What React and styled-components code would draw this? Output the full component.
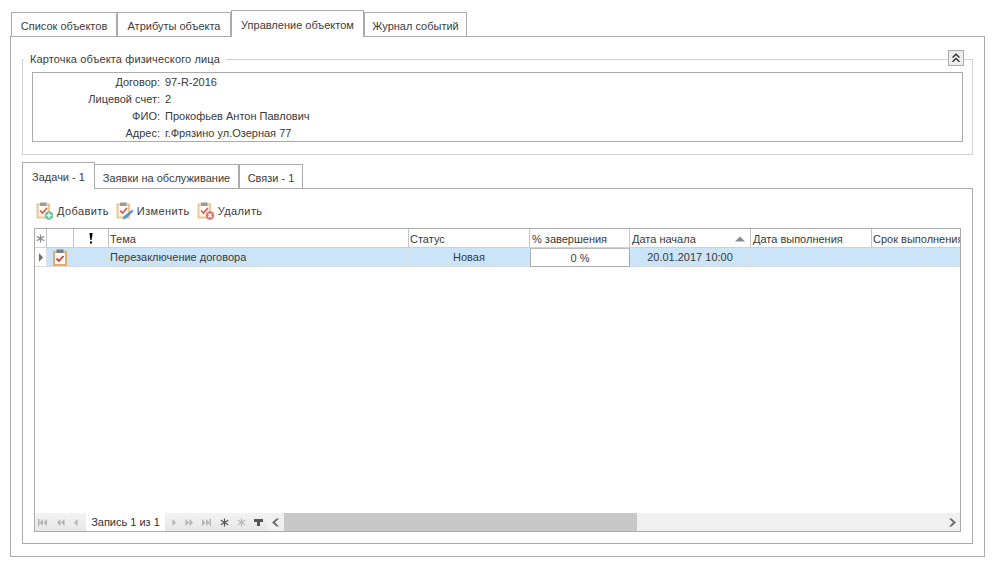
import React from "react";
import styled, { createGlobalStyle } from "styled-components";

const Global = createGlobalStyle`
  html, body { margin: 0; padding: 0; background: #fff; }
  body { font-family: "Liberation Sans", Arial, sans-serif; font-size: 11px; color: #3a3a3a; }
`;

const Page = styled.div`
  width: 995px; height: 567px; box-sizing: border-box;
  padding: 10px; overflow: hidden;
  display: flex; flex-direction: column;
`;
const TabStrip = styled.div`
  display: flex; align-items: flex-end; padding-left: ${p => p.$indent}px;
  position: relative; z-index: 1;
  margin-bottom: -1px; height: ${p => p.$h}px;
`;
const Tab = styled.div`
  box-sizing: border-box; width: ${p => p.$w}px;
  height: ${p => p.$active ? 27 : 25}px;
  border: 1px solid #ababab;
  border-bottom: ${p => p.$active ? "none" : "1px solid #ababab"};
  margin-left: ${p => p.$gap || 0}px;
  background: #fff; display: flex; align-items: center; justify-content: center;
  padding-top: ${p => p.$active ? 2 : 2}px;
  white-space: nowrap; color: #3c3c3c;
  z-index: ${p => p.$active ? 2 : 0};
`;
const OuterPanel = styled.div`
  box-sizing: border-box; width: 975px; height: 521px;
  border: 1px solid #ababab; padding: 15px 11px 12px 11px;
  display: flex; flex-direction: column;
`;
const CardGroup = styled.fieldset`
  position: relative; box-sizing: border-box; margin: 0; width: 951px; height: 103px;
  border: 1px solid #d2d2d2; padding: 0 9px; min-width: 0;
`;
const Legend = styled.legend`
  margin-left: -8px; padding: 0 6px; line-height: 14px; color: #3a3a3a; font-size: 11px; letter-spacing: 0.12px;
`;
const Collapse = styled.button`
  position: absolute; top: -16px; right: 8px; width: 16px; height: 16px; padding: 0;
  border: 1px solid #ababab; background: #ececec; display: flex; align-items: center; justify-content: center;
`;
const Details = styled.div`
  box-sizing: border-box; height: 70px; margin-top: 6px; border: 1px solid #ababab;
  display: grid; grid-template-columns: 127px 1fr; grid-auto-rows: 17px; align-items: center;
`;
const Label = styled.div`text-align: right;`;
const Value = styled.div`padding-left: 5px;`;
const InnerTabsWrap = styled.div`margin-top: 7px; display: flex; flex-direction: column; flex: 1;`;
const InnerPanel = styled.div`
  box-sizing: border-box; width: 951px; flex: 1; border: 1px solid #ababab;
  padding: 12px 11px 11px 11px; display: flex; flex-direction: column;
`;
const Toolbar = styled.div`display: flex; align-items: center; height: 20px; margin-bottom: 7px; padding-left: 2px;`;
const ToolButton = styled.div`
  display: flex; align-items: center; gap: 3px; margin-right: 7px; white-space: nowrap; color: #3a3a3a;
  letter-spacing: 0.4px;
`;
const Grid = styled.div`
  flex: 1; border: 1px solid #ababab; display: flex; flex-direction: column; overflow: hidden; min-height: 0;
`;
const COLS = "12px 27px 35px 300px 121px 100px 121px 121px 100px";
const HeaderRow = styled.div`
  display: grid; grid-template-columns: ${COLS}; height: 19px; flex: none;
  border-bottom: 1px solid #d0d0d0; box-sizing: border-box;
`;
const HeaderCell = styled.div`
  box-sizing: border-box; border-right: 1px solid #c4c4c4; display: flex; align-items: center;
  justify-content: ${p => p.$center ? "center" : "space-between"};
  padding: ${p => p.$center ? 0 : `1px 0 0 ${p.$pl || 1}px`}; white-space: nowrap; overflow: hidden;
  color: #3a3a3a;
`;
const DataRow = styled.div`
  display: grid; grid-template-columns: ${COLS}; height: 19px; flex: none; box-sizing: border-box;
  border-bottom: 1px solid #d8d8d8;
`;
const DataCell = styled.div`
  box-sizing: border-box; background: ${p => p.$white || p.$plain ? "#fff" : "#cce4f7"};
  border-right: 1px solid #d8e4ec; display: flex; align-items: center; white-space: nowrap;
  justify-content: ${p => p.$align || "center"}; padding: ${p => p.$align === "flex-start" ? "0 1px" : 0};
  ${p => p.$white ? "border: 1px solid #ababab; border-top-color:#bbb; margin-bottom:-1px;" : ""}
`;
const GridBody = styled.div`flex: 1;`;
const Footer = styled.div`
  flex: none; height: 18px; display: flex; align-items: stretch; background: #f0f0f0;
`;
const Nav = styled.div`
  display: flex; align-items: center; justify-content: space-between;
  width: ${p => p.$w}px; padding: 0 ${p => p.$pr}px 0 ${p => p.$pl}px; box-sizing: border-box;
  background: linear-gradient(#f3f3f3, #e6e6e6);
`;
const RecordInfo = styled.div`
  width: 79px; background: #fff; display: flex; align-items: center; justify-content: center; color: #333; white-space: nowrap;
`;
const ScrollBtn = styled.div`
  width: ${p => p.$w}px; display: flex; align-items: center; justify-content: center;
`;
const Thumb = styled.div`width: ${p => p.$w}px; background: #c8c8c8;`;
const Track = styled.div`flex: 1;`;

const Clip = ({ badge }) => (
  <svg width="18" height="18" viewBox="0 0 18 18">
    <rect x="1.5" y="2.5" width="11.5" height="13" fill="#fdf8f2" stroke="#efc591" strokeWidth="2" />
    <rect x="4" y="0.5" width="6.5" height="3.5" fill="#9a9a9a" />
    <path d="M4 8.5l2.5 2.5 4.5-5" fill="none" stroke="#d8564a" strokeWidth="1.6" />
    {badge === "add" && <g><circle cx="13" cy="13.5" r="4.2" fill="#6dbfa2" /><path d="M13 11v5M10.5 13.5h5" stroke="#fff" strokeWidth="1.3" /></g>}
    {badge === "del" && <g><circle cx="13" cy="13.5" r="4.2" fill="#e0736d" /><path d="M11.3 11.8l3.4 3.4M14.7 11.8l-3.4 3.4" stroke="#fff" strokeWidth="1.3" /></g>}
    {badge === "edit" && <path d="M16.2 7.8l1.4 1.4-7.6 7.2-3.2 1 .9-3.1z" fill="#4f94d8" />}
  </svg>
);
const TaskIcon = () => (
  <svg width="14" height="17" viewBox="0 0 14 17">
    <rect x="1" y="3" width="12" height="13" fill="#fff" stroke="#e8ac68" strokeWidth="2" />
    <rect x="3.5" y="0.5" width="7" height="3.5" fill="#7d7d7d" />
    <path d="M3.5 9.5l2.5 2.5 4.5-5" fill="none" stroke="#d53a2c" strokeWidth="1.8" />
  </svg>
);
const Nv = ({ d, c = "#b4b4b4", w = 9 }) => (
  <svg width={w} height="9" viewBox={`0 0 ${w} 9`}><path d={d} fill={c} /></svg>
);
const Star = ({ c = "#555" }) => (
  <svg width="9" height="9" viewBox="0 0 9 9"><path d="M4.5 0.5v8M0.8 2.3l7.4 4.4M8.2 2.3L0.8 6.7" stroke={c} strokeWidth="1.2" fill="none" /></svg>
);
const ChevronsUp = () => (
  <svg width="10" height="10" viewBox="0 0 10 10"><path d="M1.5 4.5L5 1.2l3.5 3.3M1.5 8.8L5 5.5l3.5 3.3" fill="none" stroke="#333" strokeWidth="1.4" /></svg>
);
const Exclaim = () => (
  <svg width="4" height="11" viewBox="0 0 4 11"><path d="M0.4 0h3.2L2.6 7h-1.2zM1 8.5h2v2H1z" fill="#000" /></svg>
);

export default function App() {
  return (
    <Page>
      <Global />
      <TabStrip $indent={1} $h={27}>
        <Tab $w={106}>Список объектов</Tab>
        <Tab $w={114}>Атрибуты объекта</Tab>
        <Tab $w={133} $active>Управление объектом</Tab>
        <Tab $w={103}>Журнал событий</Tab>
      </TabStrip>
      <OuterPanel>
        <CardGroup>
          <Legend>Карточка объекта физического лица</Legend>
          <Collapse><ChevronsUp /></Collapse>
          <Details>
            <Label>Договор:</Label><Value>97-R-2016</Value>
            <Label>Лицевой счет:</Label><Value>2</Value>
            <Label>ФИО:</Label><Value>Прокофьев Антон Павлович</Value>
            <Label>Адрес:</Label><Value>г.Фрязино ул.Озерная 77</Value>
          </Details>
        </CardGroup>
        <InnerTabsWrap>
          <TabStrip $indent={0} $h={27}>
            <Tab $w={73} $active>Задачи - 1</Tab>
            <Tab $w={145} $gap={-1}>Заявки на обслуживание</Tab>
            <Tab $w={64}>Связи - 1</Tab>
          </TabStrip>
          <InnerPanel>
            <Toolbar>
              <ToolButton><Clip badge="add" />Добавить</ToolButton>
              <ToolButton><Clip badge="edit" />Изменить</ToolButton>
              <ToolButton><Clip badge="del" />Удалить</ToolButton>
            </Toolbar>
            <Grid>
              <HeaderRow>
                <HeaderCell $center><Star c="#888" /></HeaderCell>
                <HeaderCell $center />
                <HeaderCell $center><Exclaim /></HeaderCell>
                <HeaderCell>Тема</HeaderCell>
                <HeaderCell>Статус</HeaderCell>
                <HeaderCell $pl={2}>% завершения</HeaderCell>
                <HeaderCell $pl={2}>Дата начала<svg width="20" height="6" viewBox="0 0 20 6"><path d="M5 5.5l5-5 5 5z" fill="#8a8a8a" /></svg></HeaderCell>
                <HeaderCell $pl={2}>Дата выполнения</HeaderCell>
                <HeaderCell>Срок выполнения</HeaderCell>
              </HeaderRow>
              <DataRow>
                <DataCell $plain><Nv w={4} d="M0 0l4 4.5L0 9z" c="#707070" /></DataCell>
                <DataCell><TaskIcon /></DataCell>
                <DataCell />
                <DataCell $align="flex-start">Перезаключение договора</DataCell>
                <DataCell>Новая</DataCell>
                <DataCell $white>0 %</DataCell>
                <DataCell>20.01.2017 10:00</DataCell>
                <DataCell />
                <DataCell />
              </DataRow>
              <GridBody />
              <Footer>
                <Nav $w={51} $pl={3} $pr={8}>
                  <Nv d="M0 1h1.5v7H0zM5 1v7L1.5 4.5zM9 1v7L5.5 4.5z" />
                  <Nv d="M4.5 1v7L1 4.5zM8.5 1v7L5 4.5z" />
                  <Nv w={5} d="M4.5 1v7L1 4.5z" />
                </Nav>
                <RecordInfo>Запись 1 из 1</RecordInfo>
                <Nav $w={102} $pl={7} $pr={4}>
                  <Nv w={5} d="M.5 1v7L4 4.5z" />
                  <Nv d="M.5 1v7L4 4.5zM4.5 1v7L8 4.5z" />
                  <Nv d="M0 1v7l3.5-3.5zM4 1v7l3.5-3.5zM7.5 1H9v7H7.5z" />
                  <Star />
                  <Star c="#b8b8b8" />
                  <Nv d="M0 1h9v3H6v4H3V4H0z" c="#555" />
                </Nav>
                <ScrollBtn $w={17}><Nv d="M5.5 0.5L1 4.5l4.5 4H8L4 4.5l4-4z" c="#6a6a6a" /></ScrollBtn>
                <Thumb $w={353} />
                <Track />
                <ScrollBtn $w={16}><Nv d="M1 0.5h2.5L8 4.5l-4.5 4H1l4-4z" c="#6a6a6a" /></ScrollBtn>
              </Footer>
            </Grid>
          </InnerPanel>
        </InnerTabsWrap>
      </OuterPanel>
    </Page>
  );
}
